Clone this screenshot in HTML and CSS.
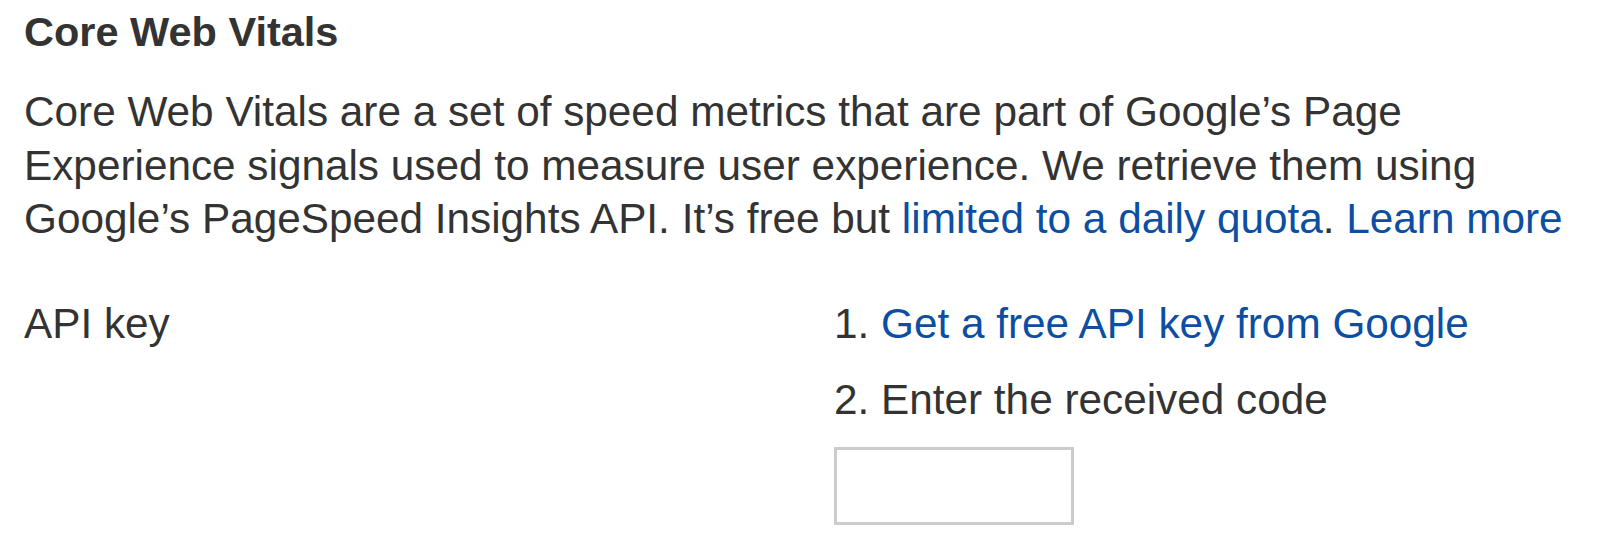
FILE: index.html
```html
<!DOCTYPE html>
<html lang="en">
<head>
<meta charset="utf-8">
<title>Core Web Vitals</title>
<link rel="stylesheet" href="styles.css">
</head>
<body>
<section class="panel">
  <h2 class="title">Core Web Vitals</h2>
  <p class="intro">Core Web Vitals are a set of speed metrics that are part of Google’s Page Experience signals used to measure user experience. We retrieve them using Google’s PageSpeed Insights API. It’s free but <a class="link" href="#">limited to a daily quota</a>. <a class="link" href="#">Learn more</a></p>
  <div class="field">
    <div class="field-label">API key</div>
    <div class="field-body">
      <ol class="steps">
        <li class="step">1. <a class="link" href="#">Get a free API key from Google</a></li>
        <li class="step">2. Enter the received code</li>
      </ol>
      <input class="code-input" type="text" aria-label="API key">
    </div>
  </div>
</section>
</body>
</html>
```
FILE: styles.css
```css
html, body {
  margin: 0;
  padding: 0;
  background: #ffffff;
}
body {
  font-family: "Liberation Sans", Arial, Helvetica, sans-serif;
  color: #333333;
}
.panel {
  width: 1542px;
  padding: 8px 24px 0 24px;
}
.title {
  margin: 0;
  font-size: 41.5px;
  font-weight: bold;
  line-height: 48px;
  color: #333333;
}
.intro {
  margin: 29px 0 0 0;
  font-size: 42.3px;
  line-height: 53.6px;
}
.link {
  color: #0b4ea2;
  text-decoration: none;
}
.field {
  display: grid;
  grid-template-columns: 810px 1fr;
  margin-top: 51px;
  font-size: 42.3px;
  line-height: 53.6px;
}
.steps {
  list-style: none;
  margin: 0;
  padding: 0;
  display: flex;
  flex-direction: column;
  gap: 23px;
}
.code-input {
  display: block;
  margin-top: 20px;
  width: 240px;
  height: 78px;
  box-sizing: border-box;
  border: 3px solid #cccccc;
  border-radius: 0;
  padding: 0 8px;
  font: inherit;
}
```
